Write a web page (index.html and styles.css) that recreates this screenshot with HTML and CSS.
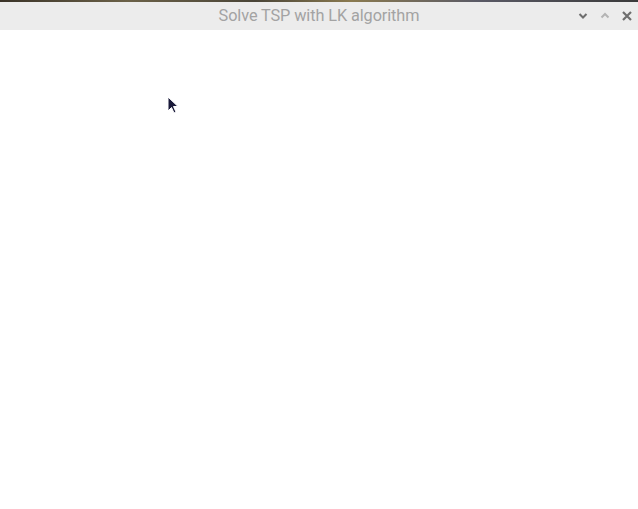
FILE: index.html
```html
<!DOCTYPE html>
<html>
<head>
<meta charset="utf-8">
<link rel="stylesheet" href="styles.css">
</head>
<body>
<div class="window">
  <div class="desk-strip"></div>
  <div class="titlebar">
    <div class="title">Solve TSP with LK algorithm</div>
    <div class="controls">
      <svg class="ctl ctl-min" width="12" height="12" viewBox="0 0 12 12"><path d="M2.5 4 L6 7.5 L9.5 4" fill="none" stroke="#6e6e6e" stroke-width="2"/></svg>
      <svg class="ctl ctl-max" width="12" height="12" viewBox="0 0 12 12"><path d="M2.5 7.5 L6 4 L9.5 7.5" fill="none" stroke="#b4b4b4" stroke-width="2"/></svg>
      <svg class="ctl ctl-close" width="12" height="12" viewBox="0 0 12 12"><path d="M2 2 L10 10 M10 2 L2 10" fill="none" stroke="#6e6e6e" stroke-width="2.2"/></svg>
    </div>
  </div>
  <div class="content">
    <svg class="cursor" width="14" height="20" viewBox="0 0 14 20"><path d="M1 1 L1 15 L4.5 11.5 L7 17 L9 16 L6.5 10.5 L11 10.5 Z" fill="#1a1a3a" stroke="#ffffff" stroke-width="1"/></svg>
  </div>
</div>
</body>
</html>
```
FILE: styles.css
```css
html, body {
  margin: 0;
  padding: 0;
  background: #ffffff;
}
.window {
  width: 638px;
  height: 509px;
  display: flex;
  flex-direction: column;
  overflow: hidden;
}
.desk-strip {
  height: 2px;
  background: linear-gradient(90deg, #3a3328 0%, #6b6148 20%, #4a4538 40%, #8a7a50 55%, #5a5a66 75%, #3a3a3a 100%);
}
.titlebar {
  height: 28px;
  background: #ececec;
  position: relative;
  display: flex;
  align-items: center;
  justify-content: center;
}
.title {
  font-family: Roboto, "Liberation Sans", sans-serif;
  font-size: 16.3px;
  color: #a3a3a3;
  letter-spacing: -0.1px;
  margin-top: -2px;
}
.controls {
  position: absolute;
  right: 5px;
  top: 8px;
  display: flex;
  gap: 10px;
}
.ctl {
  display: block;
}
.content {
  flex: 1;
  background: #ffffff;
  position: relative;
}
.cursor {
  position: absolute;
  left: 167px;
  top: 66px;
}
```
